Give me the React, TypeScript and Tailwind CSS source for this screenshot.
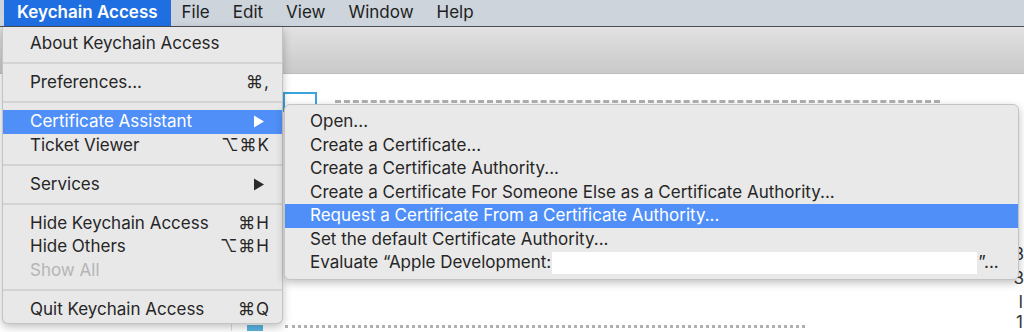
import type { ReactNode } from "react";

const font = { fontFamily: "Inter, 'Noto Sans', sans-serif" };

type Item =
  | { kind: "item"; label: ReactNode; shortcut?: string; submenu?: boolean; active?: boolean; disabled?: boolean }
  | { kind: "sep" };

const appMenu: Item[] = [
  { kind: "item", label: "About Keychain Access" },
  { kind: "sep" },
  { kind: "item", label: "Preferences...", shortcut: "⌘," },
  { kind: "sep" },
  { kind: "item", label: "Certificate Assistant", submenu: true, active: true },
  { kind: "item", label: "Ticket Viewer", shortcut: "⌥⌘K" },
  { kind: "sep" },
  { kind: "item", label: "Services", submenu: true },
  { kind: "sep" },
  { kind: "item", label: "Hide Keychain Access", shortcut: "⌘H" },
  { kind: "item", label: "Hide Others", shortcut: "⌥⌘H" },
  { kind: "item", label: "Show All", disabled: true },
  { kind: "sep" },
  { kind: "item", label: "Quit Keychain Access", shortcut: "⌘Q" },
];

function MenuRow({ item }: { item: Item }) {
  if (item.kind === "sep") {
    return (
      <div className="flex h-[15.5px] items-center">
        <div className="h-[2px] w-full bg-[#d3d3d3]" />
      </div>
    );
  }
  return (
    <div
      className={`flex h-[23.5px] items-center justify-between pl-[27px] pr-[12px] ${
        item.active ? "bg-[#4f8ff7] text-white" : item.disabled ? "text-[#b5b5b5]" : "text-[#262626]"
      }`}
    >
      <span>{item.label}</span>
      {item.shortcut ? <span className="tracking-[1px]">{item.shortcut}</span> : null}
      {item.submenu ? (
        <svg width="12" height="13" viewBox="0 0 12 13" className="mr-[5px]">
          <path d="M1 0.5 L11 6.5 L1 12.5 Z" fill={item.active ? "#ffffff" : "#2b2b2b"} />
        </svg>
      ) : null}
    </div>
  );
}

const subItems = [
  "Open...",
  "Create a Certificate...",
  "Create a Certificate Authority...",
  "Create a Certificate For Someone Else as a Certificate Authority...",
];

export default function App() {
  return (
    <div className="relative h-[332px] w-[1024px] overflow-hidden bg-white text-[17px]" style={font}>
      {/* menu bar */}
      <div className="flex h-[27px] items-center border-b-[1.5px] border-[#4a4f55] bg-[#cdd4db] text-[#1e1e1e]">
        <div className="ml-[4px] flex h-full items-center bg-[#1f6fe3] px-[13px] font-semibold text-white">
          Keychain Access
        </div>
        <div className="flex items-center gap-[23px] pl-[11px]">
          <span>File</span>
          <span>Edit</span>
          <span>View</span>
          <span>Window</span>
          <span>Help</span>
        </div>
      </div>

      {/* toolbar */}
      <div className="h-[47px] border-b border-[#bdbdbd] bg-gradient-to-b from-[#e2e2e2] to-[#c9c9c9]" />

      {/* window content behind the menus */}
      <div className="relative h-[257px]">
        <div className="absolute left-[231px] top-0 h-full w-px bg-[#dcdcdc]" />
        <div className="absolute left-[283px] top-[18px] h-[20px] w-[34px] border-[2px] border-[#3ba4dc]" />
        <div className="absolute left-[335px] top-[26px] h-[5px] w-[605px] border-t-[3px] border-dashed border-[#b0b0b0]" />
        <div className="absolute right-0 top-[168px] text-[17px] text-[#333]">3</div>
        <div className="absolute right-0 top-[192px] text-[17px] text-[#333]">3</div>
        <div className="absolute right-[1px] top-[216px] text-[17px] text-[#333]">I</div>
        <div className="absolute right-[1px] top-[236px] text-[17px] text-[#333]">1</div>
        <div className="absolute left-[247px] top-[251px] h-[6px] w-[16px] bg-[#5ab4e0]" />
        <div className="absolute left-[285px] top-[251px] h-[5px] w-[520px] border-t-[3px] border-dotted border-[#b0b0b0]" />
      </div>

      {/* app menu */}
      <div className="absolute left-[2px] top-[27px] w-[281px] rounded-b-[6px] border border-t-0 border-[#c4c4c4] bg-[#e8e8e8] pb-[2px] pt-[5px] shadow-[0_3px_8px_rgba(0,0,0,0.25)]">
        {appMenu.map((item, i) => (
          <MenuRow key={i} item={item} />
        ))}
      </div>

      {/* certificate assistant submenu */}
      <div className="absolute left-[284px] top-[104px] w-[735px] rounded-[6px] border border-[#c4c4c4] bg-[#e9e9e9] pb-[4px] pt-[5px] text-[#262626] shadow-[0_3px_8px_rgba(0,0,0,0.25)]">
        {subItems.map((label) => (
          <div key={label} className="flex h-[23.5px] items-center pl-[25px]">
            {label}
          </div>
        ))}
        <div className="flex h-[23.5px] items-center bg-[#4f8ff7] pl-[25px] text-white">
          Request a Certificate From a Certificate Authority...
        </div>
        <div className="flex h-[23.5px] items-center pl-[25px]">Set the default Certificate Authority...</div>
        <div className="flex h-[23.5px] items-center pl-[25px]">
          <span>Evaluate “Apple Development:</span>
          <span className="mx-[1px] h-[22px] w-[425px] bg-white" />
          <span>”...</span>
        </div>
      </div>
    </div>
  );
}
